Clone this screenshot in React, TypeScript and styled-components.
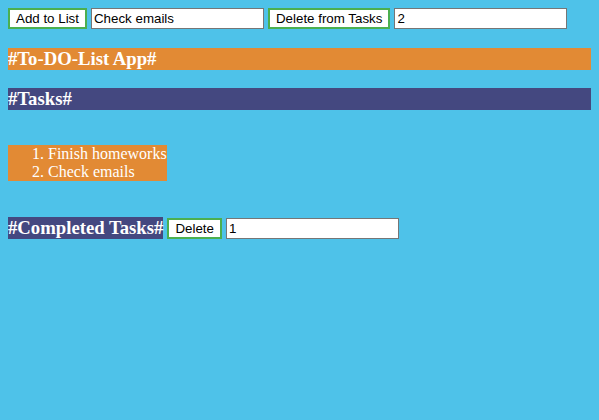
import React from "react";
import styled, { createGlobalStyle } from "styled-components";

const GlobalStyle = createGlobalStyle`
  html, body {
    margin: 0;
    padding: 0;
  }
  body {
    margin: 8px;
    background: #4ec2e9;
    font-family: "Liberation Serif", "Times New Roman", serif;
  }
`;

const Toolbar = styled.div`
  display: flex;
  align-items: center;
  gap: 4px;
`;

const Button = styled.button`
  box-sizing: border-box;
  height: 21px;
  padding: 1px 6px;
  border: 2px solid #4caf50;
  background: #ffffff;
  color: #000000;
  font-family: "Liberation Sans", Arial, sans-serif;
  font-size: 13.333px;
  line-height: 15px;
  cursor: pointer;
`;

const TextInput = styled.input`
  box-sizing: border-box;
  width: 173px;
  height: 21px;
  padding: 1px 2px;
  border: 1px solid #767676;
  background: #ffffff;
  color: #000000;
  font-family: "Liberation Sans", Arial, sans-serif;
  font-size: 13.333px;
  outline: none;
`;

const Heading = styled.h3<{ $bg: string; $inline?: boolean }>`
  margin: ${(p) => (p.$inline ? "0" : "18.72px 0")};
  width: ${(p) => (p.$inline ? "fit-content" : "auto")};
  background: ${(p) => p.$bg};
  color: #ffffff;
  font-family: "Liberation Serif", "Times New Roman", serif;
  font-size: 18.72px;
  font-weight: bold;
  line-height: 22px;
`;

const TaskList = styled.ol`
  width: fit-content;
  margin: 35px 0 0;
  padding-left: 40px;
  background: #e28a34;
  color: #ffffff;
  font-family: "Liberation Serif", "Times New Roman", serif;
  font-size: 16px;
  line-height: 18px;
`;

const CompletedRow = styled.div`
  display: flex;
  align-items: center;
  gap: 4px;
  margin-top: 36px;
`;

const ORANGE = "#e28a34";
const PURPLE = "#444880";

export default function App() {
  const tasks = ["Finish homeworks", "Check emails"];
  return (
    <>
      <GlobalStyle />
      <Toolbar>
        <Button>Add to List</Button>
        <TextInput defaultValue="Check emails" />
        <Button>Delete from Tasks</Button>
        <TextInput defaultValue="2" />
      </Toolbar>
      <Heading $bg={ORANGE}>#To-DO-List App#</Heading>
      <Heading $bg={PURPLE}>#Tasks#</Heading>
      <TaskList>
        {tasks.map((t) => (
          <li key={t}>{t}</li>
        ))}
      </TaskList>
      <CompletedRow>
        <Heading $bg={PURPLE} $inline>
          #Completed Tasks#
        </Heading>
        <Button>Delete</Button>
        <TextInput defaultValue="1" />
      </CompletedRow>
    </>
  );
}
